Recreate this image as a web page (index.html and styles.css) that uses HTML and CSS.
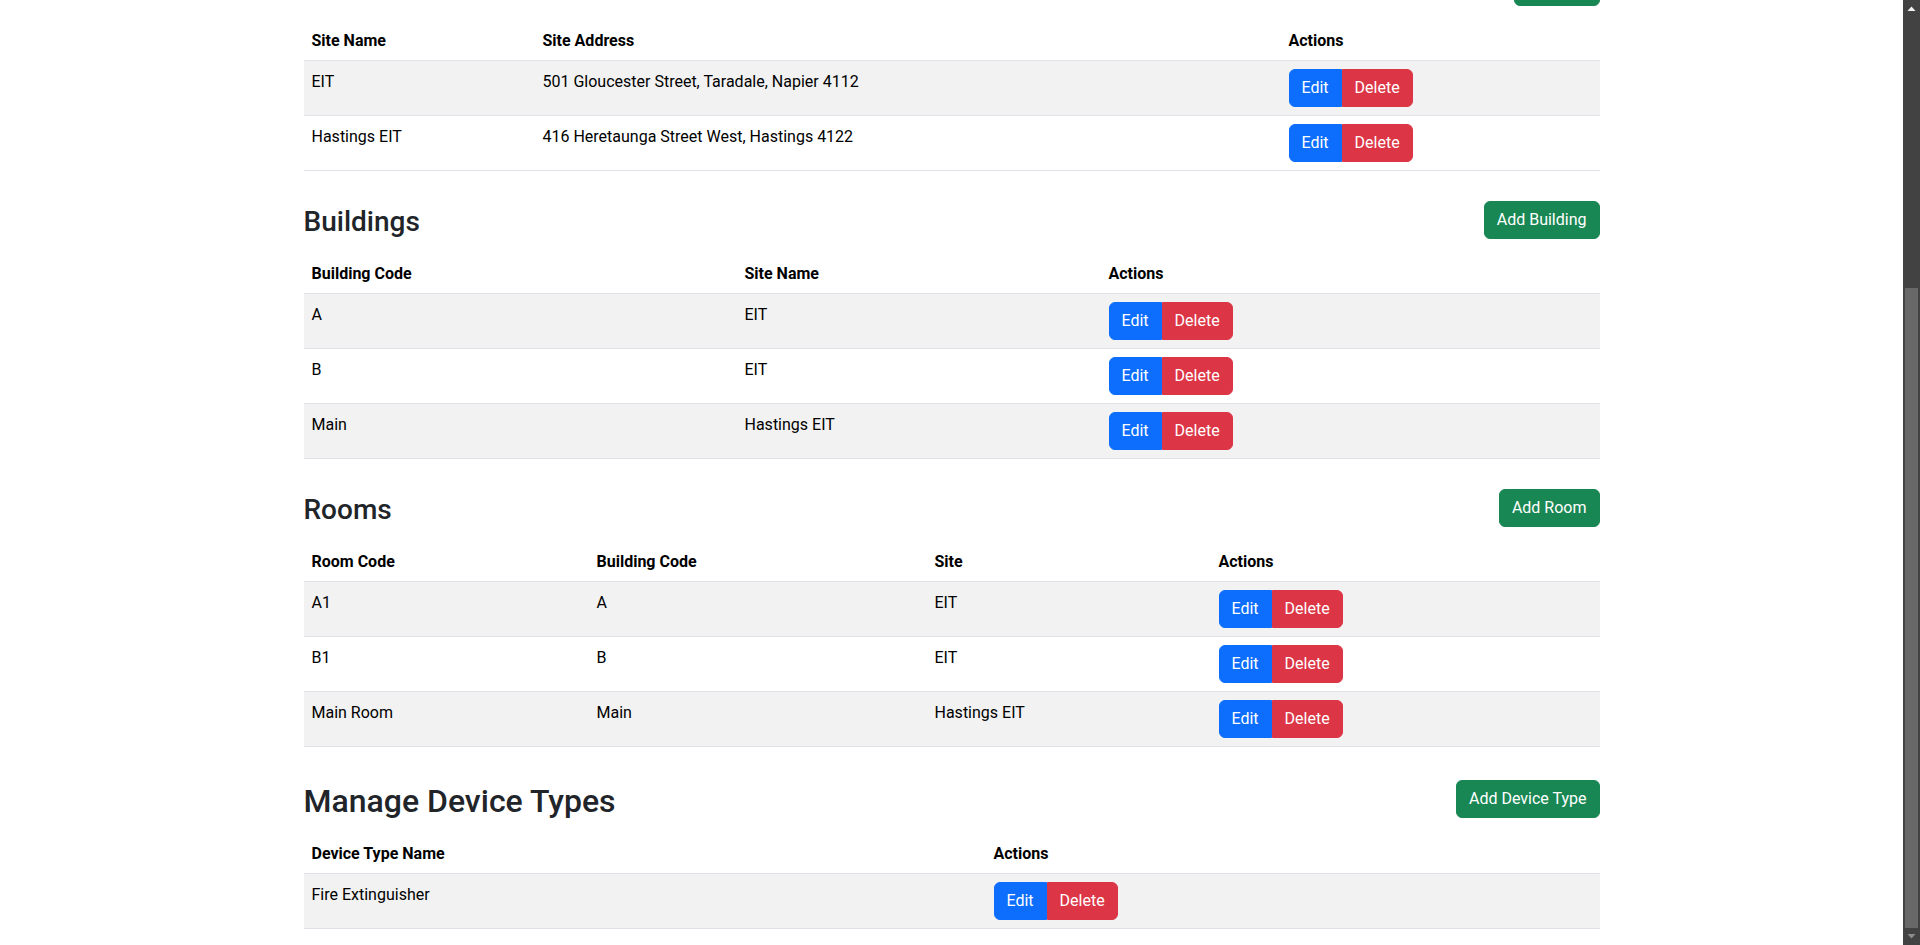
FILE: index.html
```html
<!DOCTYPE html>
<html lang="en">
<head>
<meta charset="utf-8">
<title>Manage Locations</title>
<link rel="stylesheet" href="styles.css">
</head>
<body>
<div class="layout">
  <main class="page">
    <div class="container">

      <section class="section section-first">
        <div class="section-head">
          <h3 class="section-title">Sites</h3>
          <button class="btn btn-success">Add Site</button>
        </div>
        <table class="table">
          <colgroup><col class="col-sites-1"><col class="col-sites-2"><col></colgroup>
          <thead>
            <tr><th>Site Name</th><th>Site Address</th><th>Actions</th></tr>
          </thead>
          <tbody>
            <tr>
              <td>EIT</td>
              <td>501 Gloucester Street, Taradale, Napier 4112</td>
              <td class="cell-actions"><div class="btn-group"><button class="btn btn-primary">Edit</button><button class="btn btn-danger">Delete</button></div></td>
            </tr>
            <tr>
              <td>Hastings EIT</td>
              <td>416 Heretaunga Street West, Hastings 4122</td>
              <td class="cell-actions"><div class="btn-group"><button class="btn btn-primary">Edit</button><button class="btn btn-danger">Delete</button></div></td>
            </tr>
          </tbody>
        </table>
      </section>

      <section class="section">
        <div class="section-head">
          <h3 class="section-title">Buildings</h3>
          <button class="btn btn-success">Add Building</button>
        </div>
        <table class="table">
          <colgroup><col class="col-bld-1"><col class="col-bld-2"><col></colgroup>
          <thead>
            <tr><th>Building Code</th><th>Site Name</th><th>Actions</th></tr>
          </thead>
          <tbody>
            <tr>
              <td>A</td><td>EIT</td>
              <td class="cell-actions"><div class="btn-group"><button class="btn btn-primary">Edit</button><button class="btn btn-danger">Delete</button></div></td>
            </tr>
            <tr>
              <td>B</td><td>EIT</td>
              <td class="cell-actions"><div class="btn-group"><button class="btn btn-primary">Edit</button><button class="btn btn-danger">Delete</button></div></td>
            </tr>
            <tr>
              <td>Main</td><td>Hastings EIT</td>
              <td class="cell-actions"><div class="btn-group"><button class="btn btn-primary">Edit</button><button class="btn btn-danger">Delete</button></div></td>
            </tr>
          </tbody>
        </table>
      </section>

      <section class="section">
        <div class="section-head">
          <h3 class="section-title">Rooms</h3>
          <button class="btn btn-success">Add Room</button>
        </div>
        <table class="table">
          <colgroup><col class="col-room-1"><col class="col-room-2"><col class="col-room-3"><col></colgroup>
          <thead>
            <tr><th>Room Code</th><th>Building Code</th><th>Site</th><th>Actions</th></tr>
          </thead>
          <tbody>
            <tr>
              <td>A1</td><td>A</td><td>EIT</td>
              <td class="cell-actions"><div class="btn-group"><button class="btn btn-primary">Edit</button><button class="btn btn-danger">Delete</button></div></td>
            </tr>
            <tr>
              <td>B1</td><td>B</td><td>EIT</td>
              <td class="cell-actions"><div class="btn-group"><button class="btn btn-primary">Edit</button><button class="btn btn-danger">Delete</button></div></td>
            </tr>
            <tr>
              <td>Main Room</td><td>Main</td><td>Hastings EIT</td>
              <td class="cell-actions"><div class="btn-group"><button class="btn btn-primary">Edit</button><button class="btn btn-danger">Delete</button></div></td>
            </tr>
          </tbody>
        </table>
      </section>

      <section class="section section-large">
        <div class="section-head">
          <h2 class="section-title section-title-lg">Manage Device Types</h2>
          <button class="btn btn-success">Add Device Type</button>
        </div>
        <table class="table">
          <colgroup><col class="col-dev-1"><col></colgroup>
          <thead>
            <tr><th>Device Type Name</th><th>Actions</th></tr>
          </thead>
          <tbody>
            <tr>
              <td>Fire Extinguisher</td>
              <td class="cell-actions"><div class="btn-group"><button class="btn btn-primary">Edit</button><button class="btn btn-danger">Delete</button></div></td>
            </tr>
          </tbody>
        </table>
      </section>

    </div>
  </main>

  <div class="scrollbar" aria-hidden="true">
    <div class="sb-arrow">
      <svg width="17" height="17" viewBox="0 0 17 17"><path d="M4.5 11 L8.5 6.5 L12.5 11 Z" fill="#f1f1f1"/></svg>
    </div>
    <div class="sb-space"></div>
    <div class="sb-thumb"></div>
    <div class="sb-arrow">
      <svg width="17" height="17" viewBox="0 0 17 17"><path d="M4.5 6 L8.5 10.5 L12.5 6 Z" fill="#8c8c8c"/></svg>
    </div>
  </div>
</div>
</body>
</html>
```

FILE: styles.css
```css
* {
  box-sizing: border-box;
}

html, body {
  margin: 0;
  padding: 0;
  height: 100%;
}

body {
  overflow: hidden;
  background: #fff;
  color: #212529;
  font-family: Roboto, "Liberation Sans", Arial, sans-serif;
  font-size: 16px;
  line-height: 1.5;
}

.layout {
  display: flex;
  height: 945px;
}

.page {
  flex: 1;
  min-width: 0;
  overflow: hidden;
}

.container {
  max-width: 1320px;
  margin: 0 auto;
  padding: 0 12px;
}

/* sections */
.section-head {
  display: flex;
  align-items: center;
  justify-content: space-between;
  margin: 30px 0 14px;
  min-height: 38px;
}

.section-first .section-head {
  margin-top: -32px;
}

.section-large .section-head {
  margin-top: 33px;
  margin-bottom: 15px;
}

.section-title {
  margin: 0;
  padding-top: 4px;
  font-size: 28px;
  font-weight: 500;
  line-height: 34px;
  color: #212529;
}

.section-title-lg {
  font-size: 32px;
}

/* tables */
.table {
  width: 100%;
  border-collapse: collapse;
  table-layout: fixed;
  color: #000;
}

.table th,
.table td {
  padding: 9px 8px 7px;
  text-align: left;
  vertical-align: top;
  border-bottom: 1px solid #dee2e6;
}

.table td.cell-actions {
  padding: 8px;
}

.table th {
  font-weight: 700;
}

.table tbody tr:nth-child(odd) td {
  background: #f2f2f2;
}

.col-sites-1 { width: 231px; }
.col-sites-2 { width: 746px; }
.col-bld-1 { width: 433px; }
.col-bld-2 { width: 364px; }
.col-room-1 { width: 285px; }
.col-room-2 { width: 338px; }
.col-room-3 { width: 284px; }
.col-dev-1 { width: 682px; }

/* buttons */
.btn {
  display: inline-block;
  font-family: inherit;
  font-size: 16px;
  line-height: 24px;
  font-weight: 400;
  padding: 6px 12px;
  border: 1px solid transparent;
  border-radius: 6px;
  color: #fff;
  cursor: pointer;
}

.btn-success {
  background: #198754;
  border-color: #198754;
}

.btn-primary {
  background: #0d6efd;
  border-color: #0d6efd;
}

.btn-danger {
  background: #dc3545;
  border-color: #dc3545;
}

.btn-group {
  display: inline-flex;
}

.btn-group .btn:first-child {
  border-top-right-radius: 0;
  border-bottom-right-radius: 0;
}

.btn-group .btn:last-child {
  border-top-left-radius: 0;
  border-bottom-left-radius: 0;
}

/* fake scrollbar */
.scrollbar {
  width: 17px;
  flex: none;
  display: flex;
  flex-direction: column;
  background: #424242;
}

.sb-arrow {
  height: 17px;
  flex: none;
}

.sb-arrow svg {
  display: block;
}

.sb-space {
  flex: 1;
}

.sb-thumb {
  height: 640px;
  flex: none;
  margin: 0 2px;
  background: #686868;
}
```
